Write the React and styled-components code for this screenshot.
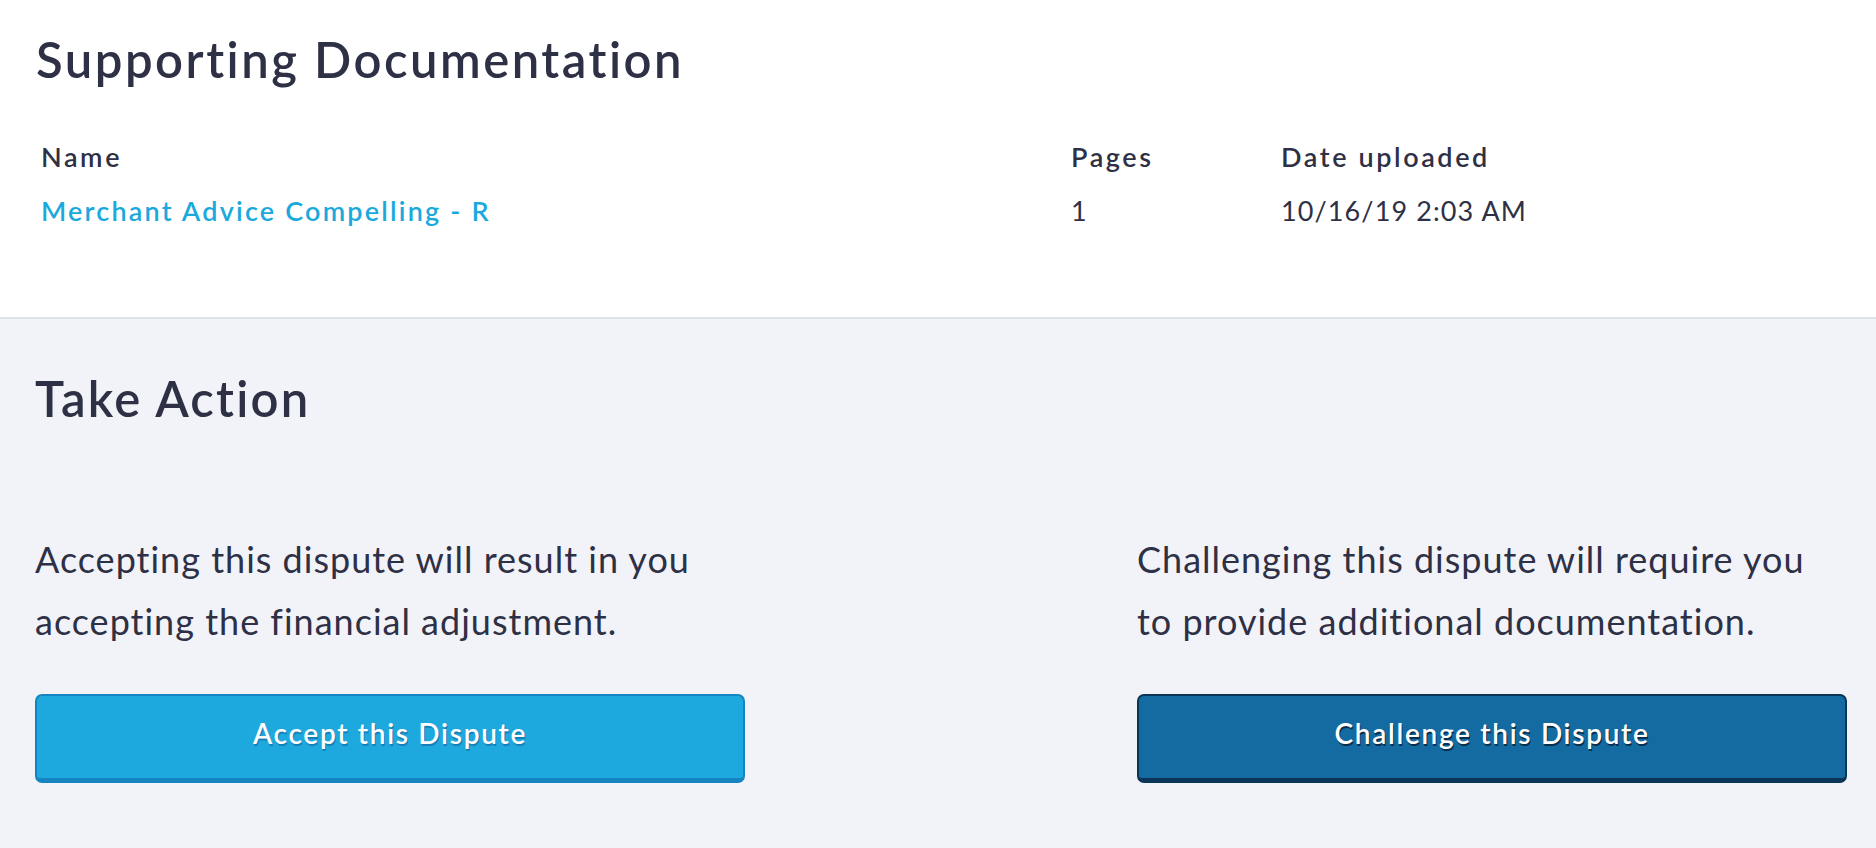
import React from 'react';
import styled, { createGlobalStyle } from 'styled-components';

const GlobalStyle = createGlobalStyle`
  body {
    margin: 0;
    font-family: Lato, "Noto Sans", sans-serif;
    color: #2e3045;
    background: #f2f3f8;
  }
`;

const Page = styled.div`
  width: 1876px;
  height: 848px;
  overflow: hidden;
`;

const DocsSection = styled.section`
  background: #fff;
  padding: 30px 36px 80px;
  border-bottom: 2px solid #dee3ea;
`;

const Title = styled.h2`
  margin: 0;
  font-size: 49px;
  line-height: 1.2;
  font-weight: 600;
  letter-spacing: ${(p) => p.$spacing || '2.5px'};
  color: #2e3045;
`;

const DocTable = styled.div`
  display: grid;
  grid-template-columns: 1030px 210px 1fr;
  margin-top: 40px;
  padding-left: 5px;
`;

const Cell = styled.div`
  font-size: 27px;
  line-height: 56px;
  font-weight: ${(p) => (p.$head ? 600 : 400)};
  letter-spacing: ${(p) => (p.$head ? '2.6px' : '1.1px')};
  color: #2e3045;
`;

const LinkRow = styled.div`
  display: contents;

  & > * {
    line-height: 52px;
  }
`;

const DocLink = styled.a`
  font-size: 27px;
  font-weight: 600;
  letter-spacing: 2.2px;
  color: #1ba9dd;
  text-decoration: none;
`;

const ActionSection = styled.section`
  padding: 50px 29px 0 35px;
`;

const Choices = styled.div`
  display: grid;
  grid-template-columns: 710px 710px;
  justify-content: space-between;
  margin-top: 100px;
`;

const Choice = styled.div`
  display: flex;
  flex-direction: column;
  gap: 42px;
`;

const Blurb = styled.p`
  margin: 0;
  font-size: 36px;
  line-height: 62px;
  font-weight: 400;
  letter-spacing: 1px;
  color: #2e3045;
`;

const ActionButton = styled.button`
  height: 89px;
  width: 100%;
  padding: 0 0 8px;
  border-radius: 7px;
  border: 2px solid ${(p) => p.$edge};
  border-bottom-width: 5px;
  background: ${(p) => p.$fill};
  color: #fff;
  font-family: Lato, "Noto Sans", sans-serif;
  font-size: 28px;
  font-weight: 600;
  letter-spacing: 1.7px;
  text-shadow: 1px 2px 0 ${(p) => p.$shadow};
  cursor: pointer;
`;

export default function App() {
  return (
    <Page>
      <GlobalStyle />
      <DocsSection>
        <Title>Supporting Documentation</Title>
        <DocTable>
          <Cell $head>Name</Cell>
          <Cell $head>Pages</Cell>
          <Cell $head>Date uploaded</Cell>
          <LinkRow>
            <DocLink href="#">Merchant Advice Compelling - R</DocLink>
            <Cell>1</Cell>
            <Cell>10/16/19 2:03 AM</Cell>
          </LinkRow>
        </DocTable>
      </DocsSection>
      <ActionSection>
        <Title $spacing="2.2px">Take Action</Title>
        <Choices>
          <Choice>
            <Blurb>
              Accepting this dispute will result in you
              <br />
              accepting the financial adjustment.
            </Blurb>
            <ActionButton $fill="#1ea9de" $edge="#1585c2" $shadow="#167fb6">
              Accept this Dispute
            </ActionButton>
          </Choice>
          <Choice>
            <Blurb>
              Challenging this dispute will require you
              <br />
              to provide additional documentation.
            </Blurb>
            <ActionButton $fill="#136ba2" $edge="#0b3556" $shadow="#0a2f4c">
              Challenge this Dispute
            </ActionButton>
          </Choice>
        </Choices>
      </ActionSection>
    </Page>
  );
}
